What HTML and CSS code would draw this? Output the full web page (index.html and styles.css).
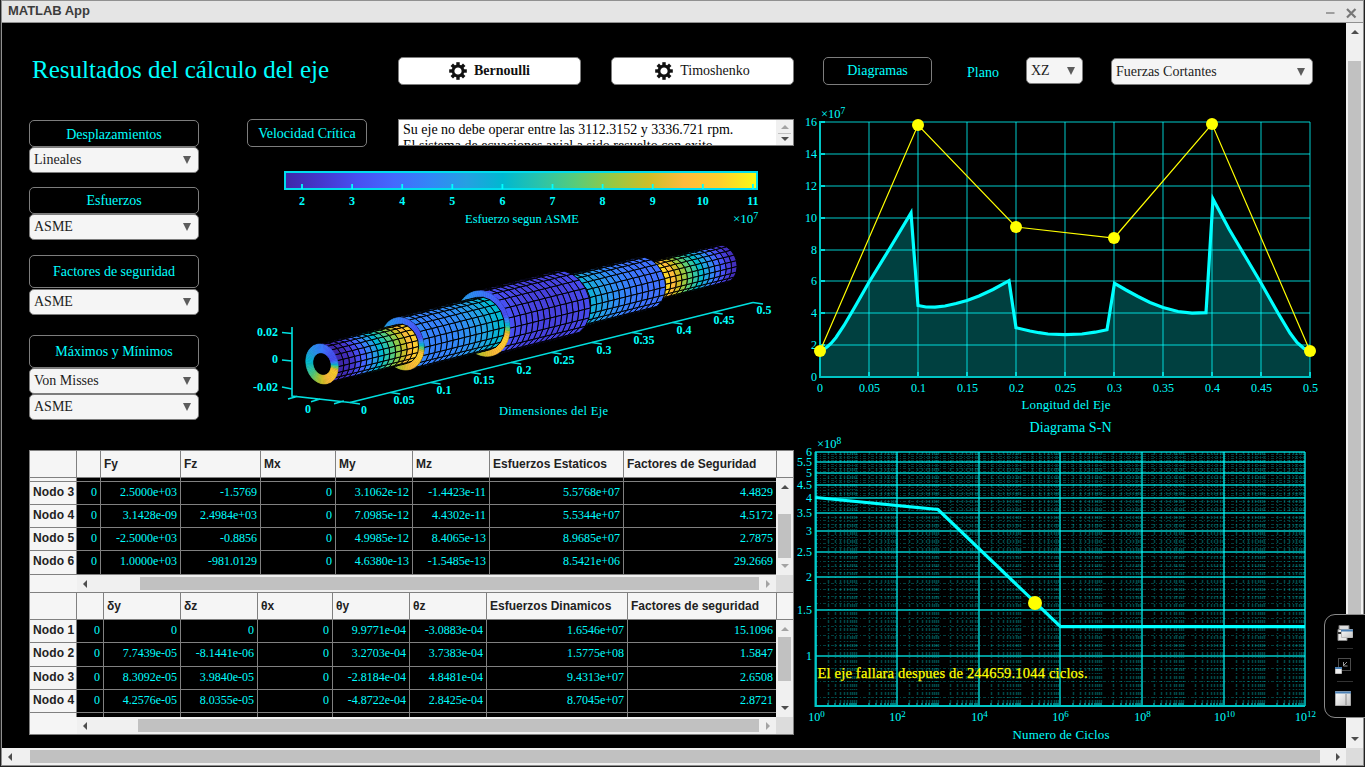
FILE: index.html
```html
<!DOCTYPE html>
<html lang="es">
<head>
<meta charset="utf-8">
<title>MATLAB App</title>
<link rel="stylesheet" href="styles.css">
</head>
<body>
<div class="window">
  <header class="titlebar">
    <span class="titlebar-text">MATLAB App</span>
    <svg class="titlebar-icons" width="34" height="21" viewBox="0 0 34 21"><path d="M0 12h8.500" stroke="#777" stroke-width="1.3"/><path d="M21 8l8.500 8.500M29.500 8l-8.500 8.500" stroke="#777" stroke-width="2.2"/></svg>
  </header>
  <div class="view">
    <main class="app">
      <section class="left">
        <div class="toprow">
          <h1>Resultados del cálculo del eje</h1>
          <button class="btn light bold"><svg class="gear" viewBox="-9 -9 18 18"></svg>Bernoulli</button>
          <button class="btn light"><svg class="gear" viewBox="-9 -9 18 18"></svg>Timoshenko</button>
        </div>
        <div class="middle">
          <div class="side">
            <div class="group g1"><button class="btn">Desplazamientos</button><div class="drop">Lineales</div></div>
            <div class="group g2"><button class="btn">Esfuerzos</button><div class="drop">ASME</div></div>
            <div class="group g3"><button class="btn tall">Factores de seguridad</button><div class="drop">ASME</div></div>
            <div class="group g4"><button class="btn tall">Máximos y Mínimos</button><div class="drop">Von Misses</div><div class="drop">ASME</div></div>
          </div>
          <div class="viz">
            <div class="critrow">
              <button class="btn crit">Velocidad Crítica</button>
              <div class="msg">
                <div class="msg-text">Su eje no debe operar entre las 3112.3152 y 3336.721 rpm.<br>El sistema de ecuaciones axial a sido resuelto con exito.</div>
                <div class="spin"><i class="arr up dim"></i><i class="sep"></i><i class="arr down"></i></div>
              </div>
            </div>
            <svg id="shaft" class="shaft" width="547" height="303" viewBox="247 147 547 303"></svg>
          </div>
        </div>
        <div class="table t1" id="t1"></div>
        <div class="table t2" id="t2"></div>
      </section>
      <section class="right">
        <div class="controls">
          <button class="btn diag">Diagramas</button>
          <span class="plano">Plano</span>
          <div class="drop xz">XZ</div>
          <div class="drop fc">Fuerzas Cortantes</div>
        </div>
        <svg id="plots" class="plots" width="551" height="648" viewBox="795 100 551 648"></svg>
      </section>
    </main>
    <div class="vbar page-v"><i class="arr up"></i><i class="thumb"></i><i class="arr down"></i></div>
    <div class="hbar page-h"><i class="arr lft"></i><i class="thumb"></i><i class="arr rgt"></i></div>
    <div class="corner"></div>
  </div>
</div>
<aside class="dock">
  <svg width="40" height="102" viewBox="1325 615 40 102">
    <defs><linearGradient id="sheet" x1="0" y1="0" x2="1" y2="1"><stop offset="0" stop-color="#fff"/><stop offset="1" stop-color="#c4c4c4"/></linearGradient></defs>
    <path d="M1339 625.5h10v12h-10z" fill="#ddd" stroke="#777"/><path d="M1338 629.5h9v11h-9z" fill="#e9e9e9" stroke="#888"/>
    <path d="M1338 633h4" stroke="#333" stroke-width="2"/>
    <path d="M1341.500 629.500h11v8h-11z" fill="url(#sheet)" stroke="#bbb"/><path d="M1341 630.500h12" stroke="#4a80b5" stroke-width="2"/>
    <path d="M1337 648.500h16M1337 681.500h16" stroke="#333"/>
    <path d="M1338.500 658.500h12v12h-12z" fill="none" stroke="#999" stroke-dasharray="1 1"/>
    <path d="M1347 662l-3 3M1343.500 662v4h4" fill="none" stroke="#999"/>
    <path d="M1335.500 667.500h6v6h-6z" fill="#eee" stroke="#bbb"/><path d="M1335 668h7" stroke="#4a80b5" stroke-width="2"/>
    <path d="M1335.500 691.500h15v14h-15z" fill="url(#sheet)" stroke="#aaa"/><path d="M1335 692.500h16" stroke="#4a80b5" stroke-width="2"/><path d="M1346 694v11" stroke="#888"/>
  </svg>
</aside>
<script src="app.js"></script>
</body>
</html>
```
FILE: styles.css
```css
* { box-sizing: border-box; }
body { margin: 0; width: 1365px; height: 767px; background: #222; overflow: hidden; font-family: "Liberation Serif", serif; font-size: 14px; }
.window { margin-left: 1px; width: 1363px; height: 766px; border: 1px solid #909090; background: #000; }
.titlebar { height: 22px; background: #e5e5e5; border-bottom: 1px solid #909090; display: flex; justify-content: space-between; padding: 0 3px 0 6px; }
.titlebar-text { font: bold 13px/19px "Liberation Sans", sans-serif; color: #3c3c3c; letter-spacing: -0.05px; }
.view { display: grid; grid-template: 725px 17px / 1344px 17px; }
.app { display: flex; background: #000; overflow: hidden; }
.left { margin-left: 27px; width: 765px; padding-top: 34px; }
.right { width: 552px; padding-top: 34px; }
.toprow { display: flex; height: 28px; align-items: flex-start; }
h1 { margin: -1px 0 0 3px; width: 366px; font-weight: normal; font-size: 25px; line-height: 28px; color: #0ff; white-space: nowrap; }
.btn { font: 14px "Liberation Serif", serif; color: #0ff; background: #000; border: 1px solid #7d7d7d; border-radius: 5px; height: 28px; width: 170px; padding: 0; display: flex; align-items: center; justify-content: center; white-space: nowrap; }
.light { background: #fff; color: #111; width: 183px; gap: 7px; }
.light + .light { margin-left: 30px; }
.bold { font-weight: bold; }
.gear { width: 18px; height: 18px; }
.drop { height: 26px; width: 170px; background: #f5f5f5; color: #1c1c1c; border: 1px solid #7d7d7d; border-radius: 5px; padding: 0 7px 0 4px; display: flex; align-items: center; justify-content: space-between; line-height: 16px; }
.drop::after { content: ""; border: 4px solid transparent; border-top: 8px solid #5c5c5c; border-bottom: 0; }
.middle { display: flex; margin-top: 34px; height: 331px; }
.side { width: 170px; padding-top: 1px; }
.g1 { height: 67px; }
.g2 { height: 68px; }
.g2 .btn { height: 27px; }
.g3 { height: 80px; }
.g1 .btn { height: 27px; padding-top: 2px; }
.tall { height: 33px; }
.g3 .drop { margin-top: 1px; }
.viz { margin-left: 48px; width: 547px; }
.critrow { display: flex; gap: 31px; height: 28px; }
.crit { width: 120px; padding-top: 2px; }
.msg { width: 396px; height: 27px; background: #fff; border: 1px solid #7d7d7d; display: flex; justify-content: space-between; overflow: hidden; color: #000; }
.msg-text { padding: 2px 0 0 4px; line-height: 16px; white-space: nowrap; }
.spin { width: 17px; background: #f0f0f0; display: flex; flex-direction: column; align-items: center; justify-content: space-between; padding: 5px 0 4px; }
.sep { width: 13px; height: 1px; background: #c1c1c1; }
.shaft, .plots { display: block; }
svg text { font-family: "Liberation Serif", serif; fill: #0ff; }
.arr { display: block; border: 4px solid transparent; width: 0; height: 0; }
.arr.up { border-bottom-color: #4d4d4d; border-top: 0; }
.arr.down { border-top-color: #4d4d4d; border-bottom: 0; }
.arr.lft { border-right: 4px solid #4d4d4d; border-left: 0; }
.arr.rgt { border-left: 4px solid #4d4d4d; border-right: 0; }
.arr.up.dim { border-bottom-color: #a3a3a3; }
.arr.down.dim { border-top-color: #a3a3a3; }
.arr.rgt.dim { border-left-color: #a3a3a3; }
.vbar { background: #f0f0f0; display: flex; flex-direction: column; align-items: center; width: 17px; }
.vbar .thumb { width: 13px; background: #c1c1c1; }
.vbar .arr.down { margin-top: auto; }
.hbar { background: #f0f0f0; display: flex; align-items: center; height: 17px; }
.hbar .thumb { height: 13px; background: #c1c1c1; }
.hbar .arr.rgt { margin-left: auto; }
.corner { background: #dcdcdc; width: 17px; height: 17px; }
.page-v { padding: 7px 0; }
.page-v .thumb { margin-top: 27px; height: 600px; }
.page-h { padding: 0 6px; }
.page-h .thumb { margin-left: 18px; width: 1290px; }
.controls { display: flex; height: 43px; padding-left: 29px; color: #0ff; }
.diag { width: 109px; }
.plano { margin: 7px 26px 0 35px; width: 33px; line-height: 17px; }
.xz { width: 57px; height: 27px; }
.fc { width: 202px; height: 27px; margin: 1px 0 0 28px; }
.plots { margin-left: 1px; }

.table { width: 765px; border: 1px solid #808080; background: #f5f5f5; height: 143px; }
.t1 { height: 142px; border-bottom: 0; }
.thead, .trow { display: grid; overflow: hidden; }
.t1 .thead, .t1 .trow { grid-template-columns: 47px 24px 80px 80px 75px 77px 77px 134px 152px 17px; }
.t2 .thead, .t2 .trow { grid-template-columns: 47px 27px 77px 77px 75px 77px 77px 141px 148px 17px; }
.thead { height: 27px; font: bold 12px/26px "Liberation Sans", sans-serif; color: #222; }
.thead div { border-right: 1px solid #808080; border-bottom: 1px solid #808080; padding-left: 3px; white-space: nowrap; }
.thead div:nth-child(9) { border-right: 0; }
.thead div:last-child { border-right: 0; border-left: 1px solid #808080; }
.tbody { display: grid; grid-template-columns: 746px 17px; background: #000; }
.trow { width: 746px; font-size: 12px; line-height: 20px; color: #0ff; text-align: right; }
.trow div { border-right: 1px solid #808080; border-bottom: 1px solid #808080; padding-right: 3px; overflow: hidden; }
.trow div:nth-child(9) { border-right: 0; }
.trow div:first-child { background: #f5f5f5; color: #222; font: bold 12px/21px "Liberation Sans", sans-serif; text-align: left; padding: 0 0 0 3px; letter-spacing: 0.1px; white-space: nowrap; }
.h23 { height: 23px; }
.h24 { height: 24px; }
.h4 { height: 4px; }
.open div { border-bottom: 0; }
.tfoot { display: grid; grid-template-columns: 47px 699px 17px; }
.tfoot .hbar { padding: 0 6px; }
.t1 .tfoot .thumb { margin-left: 53px; width: 619px; }
.t2 .tfoot .thumb { margin-left: 51px; width: 621px; }
.tbody .vbar { padding: 7px 0; }
.t1 .vbar .thumb { margin-top: 25px; height: 44px; }
.t2 .vbar .thumb { margin-top: 6px; height: 44px; }
.dock { position: absolute; left: 1324px; top: 614px; width: 43px; height: 104px; background: #000; border: 1px solid #8a8a8a; border-radius: 11px 0 0 11px; }
```
FILE: app.js
```js
const NS = 'http://www.w3.org/2000/svg';
function add(parent, tag, attrs, text) {
  const e = document.createElementNS(NS, tag);
  for (const k in attrs) e.setAttribute(k, attrs[k]);
  if (text !== undefined) e.textContent = text;
  parent.appendChild(e);
  return e;
}
function label(parent, x, y, text, size, anchor, extra) {
  return add(parent, 'text', Object.assign({ x, y, 'font-size': size, 'text-anchor': anchor || 'middle' }, extra), text);
}
function power(parent, x, y, base, exp, size, anchor) {
  const t = label(parent, x, y, base, size, anchor);
  add(t, 'tspan', { dy: -4, 'font-size': size - 3 }, exp);
}

document.querySelectorAll('.gear').forEach(g => {
  add(g, 'circle', { r: 5, fill: 'none', stroke: '#111', 'stroke-width': 2.8 });
  for (let a = 0; a < 360; a += 45)
    add(g, 'rect', { x: -1.7, y: -8.8, width: 3.4, height: 3.6, fill: '#111', transform: `rotate(${a})` });
});

/* Tables */
function table(id, heads, rows, upDim, downDim) {
  const cells = a => a.map(c => `<div>${c}</div>`).join('');
  document.getElementById(id).innerHTML =
    `<div class="thead">${cells(heads)}</div><div class="tbody"><div>` +
    rows.map(r => `<div class="trow ${r[0]}">${cells(r.slice(1))}</div>`).join('') +
    `</div><div class="vbar"><i class="arr up ${upDim}"></i><i class="thumb"></i><i class="arr down ${downDim}"></i></div></div>` +
    '<div class="tfoot"><div></div><div class="hbar"><i class="arr lft"></i><i class="thumb"></i><i class="arr rgt dim"></i></div><div class="corner"></div></div>';
}
const blank = ['', '', '', '', '', '', '', '', ''];
table('t1', ['', '', 'Fy', 'Fz', 'Mx', 'My', 'Mz', 'Esfuerzos Estaticos', 'Factores de Seguridad', ''], [
  ['h4', ...blank],
  ['h23', 'Nodo 3', '0', '2.5000e+03', '-1.5769', '0', '3.1062e-12', '-1.4423e-11', '5.5768e+07', '4.4829'],
  ['h23', 'Nodo 4', '0', '3.1428e-09', '2.4984e+03', '0', '7.0985e-12', '4.4302e-11', '5.5344e+07', '4.5172'],
  ['h23', 'Nodo 5', '0', '-2.5000e+03', '-0.8856', '0', '4.9985e-12', '8.4065e-13', '8.9685e+07', '2.7875'],
  ['h24', 'Nodo 6', '0', '1.0000e+03', '-981.0129', '0', '4.6380e-13', '-1.5485e-13', '8.5421e+06', '29.2669']
], '', 'dim');
table('t2', ['', '', 'δy', 'δz', 'θx', 'θy', 'θz', 'Esfuerzos Dinamicos', 'Factores de seguridad', ''], [
  ['h23', 'Nodo 1', '0', '0', '0', '0', '9.9771e-04', '-3.0883e-04', '1.6546e+07', '15.1096'],
  ['h24', 'Nodo 2', '0', '7.7439e-05', '-8.1441e-06', '0', '3.2703e-04', '3.7383e-04', '1.5775e+08', '1.5847'],
  ['h23', 'Nodo 3', '0', '8.3092e-05', '3.9840e-05', '0', '-2.8184e-04', '4.8481e-04', '9.4313e+07', '2.6508'],
  ['h23', 'Nodo 4', '0', '4.2576e-05', '8.0355e-05', '0', '-4.8722e-04', '2.8425e-04', '8.7045e+07', '2.8721'],
  ['h4 open', ...blank]
], 'dim', '');

/* Stress curve in plot coordinates */
const curve = [[820,351],[823,349.800],[827,347],[831,343.500],[836,337.500],[844,325.500],[856,305],[868.500,283],[890,248],[911,213],[918,305.500],[926,307],[935,307.200],[945,306],[956,303.500],[967,300.500],[979,296],[993,289.500],[1009,280.700],[1016,327.700],[1030,331],[1039,332.700],[1048,334],[1065,334.700],[1082,334],[1095,332.200],[1107,329.700],[1114.500,283.300],[1126,290],[1138,296.500],[1150,302.500],[1163,307.500],[1178,311.500],[1192,313.200],[1206,312.700],[1213,199],[1229,229],[1245,256],[1261,283],[1278,313],[1290,333],[1297,342.500],[1304,348.500],[1310,351]];
function stress(s) {
  const x = 820 + s * 980;
  for (let i = 1; i < curve.length; i++)
    if (x <= curve[i][0] + 1e-6) {
      const [a, b] = [curve[i - 1], curve[i]];
      return (377 - (a[1] + (b[1] - a[1]) * (x - a[0]) / (b[0] - a[0]))) / 15.94;
    }
  return 1.65;
}
const parula = [[62,38,168],[69,55,206],[72,79,242],[68,105,254],[50,135,247],[37,160,226],[0,184,208],[42,195,170],[88,204,122],[150,200,68],[205,190,40],[254,186,60],[253,208,44],[249,251,21]];
function colour(v) {
  let f = Math.max(0, Math.min(0.9999, (v - 1.65) / 9.45)) * (parula.length - 1);
  const i = Math.floor(f); f -= i;
  return 'rgb(' + parula[i].map((c, k) => Math.round(c + (parula[i + 1][k] - c) * f)).join() + ')';
}

/* Colour bar and 3-D shaft */
const sh = document.getElementById('shaft');
const grad = add(add(sh, 'defs', {}), 'linearGradient', { id: 'bar' });
parula.forEach((c, i) => add(grad, 'stop', { offset: i / (parula.length - 1), 'stop-color': `rgb(${c})` }));
add(sh, 'rect', { x: 285, y: 172, width: 472, height: 17, fill: 'url(#bar)', stroke: '#0de', 'stroke-width': 2 });
for (let v = 2; v <= 11; v++) {
  const x = 302 + (v - 2) * 50.1;
  add(sh, 'path', { d: `M${x} 184v5`, stroke: '#0ff', 'stroke-width': 1.8 });
  label(sh, x, 205, v, 12, 'middle', { 'font-weight': 'bold' });
}
label(sh, 465, 223, 'Esfuerzo segun ASME', 12.500, 'start', { textLength: 114 });
power(sh, 733, 223, '×10', '7', 13, 'start');

const R = 16, RY = 19.5, SK = 2.8;
const pt = (s, r, t) => [322 + 806 * s + r * R * Math.cos(t), 364 - 202 * s + r * (SK * Math.cos(t) - RY * Math.sin(t))];
const poly = ps => 'M' + ps.map(p => p.map(n => n.toFixed(1)).join()).join('L') + 'Z';
const ringStops = [[0,7],[12,5],[25,3],[50,3.4],[90,4.2],[135,5],[180,6],[225,7.3],[255,8.4],[285,9.3],[315,10],[340,10.400],[352,9],[360,7]];
function ringValue(deg) {
  for (let i = 1; i < ringStops.length; i++)
    if (deg <= ringStops[i][0]) {
      const [a, b] = [ringStops[i - 1], ringStops[i]];
      return a[1] + (b[1] - a[1]) * (deg - a[0]) / (b[0] - a[0]);
    }
}
function ring(s, r0, r1) {
  for (let d = 0; d < 360; d += 5) {
    const a = d * Math.PI / 180, b = (d + 5) * Math.PI / 180, c = colour(ringValue(d + 2.5));
    add(sh, 'path', { d: poly([pt(s, r0, a), pt(s, r1, a), pt(s, r1, b), pt(s, r0, b)]), fill: c, stroke: c, 'stroke-width': 0.6 });
  }
}
function cylinder(s0, s1, r) {
  const n = 14, m = 20, ds = (s1 - s0) / n, dt = 2 * Math.PI / m;
  for (let i = n - 1; i >= 0; i--) {
    const a = s0 + i * ds, b = a + ds, fill = colour(stress(Math.min(a, s0 + 0.0925)));
    for (let j = 0; j < m; j++) {
      const t = j * dt, mid = t + dt / 2;
      if (403 * (RY * Math.cos(mid) + SK * Math.sin(mid)) + 101 * R * Math.sin(mid) <= -900) continue;
      add(sh, 'path', { d: poly([pt(a, r, t), pt(b, r, t), pt(b, r, t + dt), pt(a, r, t + dt)]), fill, stroke: '#000', 'stroke-width': 1 });
    }
  }
}
cylinder(0.400, 0.496, 0.96);
cylinder(0.300, 0.400, 1.33);
cylinder(0.200, 0.300, 1.66);
ring(0.2, 1.33, 1.66);
cylinder(0.100, 0.200, 1.35);
ring(0.1, 0.98, 1.33);
cylinder(0, 0.1, 1);
ring(0, 0.57, 1.01);

add(sh, 'path', { d: 'M292 327V396L350 402.500L753 302.500M282 332.500l10 1M282 360l10 1M282 387l10 2M288 399l9-2.500M311 401.700l9-2.600M334 403.700l10-2.600', fill: 'none', stroke: '#00e0e0', 'stroke-width': 1.6 });
['0', '0.05', '0.1', '0.15', '0.2', '0.25', '0.3', '0.35', '0.4', '0.45', '0.5'].forEach((v, i) => {
  add(sh, 'path', { d: `M${350 + i * 40.3} ${402.5 - i * 10}l10 1.500`, stroke: '#00e0e0', 'stroke-width': 1.6 });
  label(sh, 364 + i * 40, 414 - i * 10, v, 12, 'middle', { 'font-weight': 'bold' });
});
[['0.02', 336], ['0', 363], ['-0.02', 391]].forEach(([t, y]) => label(sh, 278, y, t, 12, 'end', { 'font-weight': 'bold' }));
label(sh, 308, 413, '0', 12, 'middle', { 'font-weight': 'bold' });
label(sh, 499, 415, 'Dimensiones del Eje', 12.500, 'start', { textLength: 109 });

/* Shear diagram */
const pl = document.getElementById('plots');
const line = 'M' + curve.map(p => p.join()).join('L');
add(pl, 'path', { d: line + 'L1310 377L820 377Z', fill: '#004040' });
for (let i = 0; i <= 10; i++) {
  const x = 820 + i * 49;
  add(pl, 'path', { d: `M${x} 122V377`, stroke: '#0ff', 'stroke-opacity': 0.4, 'stroke-width': 2 });
  add(pl, 'path', { d: `M${x} 377v-5`, stroke: '#00d8d8', 'stroke-width': 2 });
  label(pl, x + (i ? 0.5 : 0), 392, +(i * 0.05).toFixed(2), 12);
}
for (let i = 0; i <= 8; i++) {
  const y = Math.round(377 - i * 31.875);
  add(pl, 'path', { d: `M820 ${y}H1310`, stroke: '#0ff', 'stroke-opacity': 0.4, 'stroke-width': 2 });
  add(pl, 'path', { d: `M820 ${y}h5`, stroke: '#00d8d8', 'stroke-width': 2 });
  label(pl, 817, y + 4, i * 2, 12, 'end');
}
add(pl, 'path', { d: 'M820 121V377H1311', fill: 'none', stroke: '#00c4c4', 'stroke-width': 2 });
add(pl, 'path', { d: line, fill: 'none', stroke: '#0ff', 'stroke-width': 3.200 });
const peaks = [[820,351],[918,125],[1016,227],[1114,238],[1212,124],[1310,351]];
add(pl, 'path', { d: 'M' + peaks.map(p => p.join()).join('L'), fill: 'none', stroke: '#ff0', 'stroke-width': 1.2 });
peaks.forEach(([cx, cy]) => add(pl, 'circle', { cx, cy, r: 6, fill: '#ff0' }));
power(pl, 821, 118, '×10', '7', 12.500, 'start');
label(pl, 1021.5, 409, 'Longitud del Eje', 13, 'start', { textLength: 89 });

/* S-N diagram */
const sy = v => 656 - 262 * Math.log10(v);
label(pl, 1029.5, 432, 'Diagrama S-N', 14, 'start', { textLength: 82 });
power(pl, 817, 448, '×10', '8', 12.500, 'start');
let minor = '';
for (let v = 7; v < 60; v++) if (v % 5 || v < 10) minor += `M815 ${Math.round(sy(v / 10))}.500H1305`;
add(pl, 'path', { d: minor, stroke: '#0ff', 'stroke-opacity': 0.25, 'stroke-width': 1, 'stroke-dasharray': '3 2 1 2', 'shape-rendering': 'crispEdges' });
let minorV = '', ticks = '';
for (let d = 0; d < 12; d++) for (let k = 2; k <= 10; k++) {
  const x = Math.round(815.5 + 40.8 * (d + Math.log10(k)));
  if (k === 10 && d % 2) continue;
  minorV += `M${x}.500 452V706`;
  ticks += `M${x} 706v-3`;
}
add(pl, 'path', { d: minorV, stroke: '#0ff', 'stroke-opacity': 0.28, 'stroke-width': 1.5, 'stroke-dasharray': '3 2 1 2' });
add(pl, 'path', { d: ticks, stroke: '#00c8c8', 'stroke-width': 1.2 });
[1, 1.5, 2, 2.5, 3, 3.5, 4, 4.5, 5, 5.5, 6].forEach(v => {
  const y = Math.round(sy(v));
  add(pl, 'path', { d: `M815 ${y}H1305`, stroke: '#0ff', 'stroke-opacity': 0.6, 'stroke-width': 2 });
  label(pl, 812, y + 4, v, 12, 'end');
});
for (let i = 0; i <= 6; i++) {
  const x = Math.round(815.5 + i * 81.6);
  add(pl, 'path', { d: `M${x} 452V706`, stroke: '#0ff', 'stroke-opacity': 0.6, 'stroke-width': 2 });
  power(pl, x + 0.5, 721, '10', i * 2, 12, 'middle');
}
add(pl, 'path', { d: 'M815.500 452V706H1305', fill: 'none', stroke: '#00c8c8', 'stroke-width': 2 });
add(pl, 'path', { d: 'M815.500 497.500L938 509.500L1060.500 626.700H1305', fill: 'none', stroke: '#0ff', 'stroke-width': 3.2 });
add(pl, 'circle', { cx: 1035, cy: 603, r: 7, fill: '#ff0' });
label(pl, 817.5, 678, 'El eje fallara despues de 244659.1044 ciclos.', 14.500, 'start', { textLength: 270, style: 'fill:#ff0;stroke:#ff0;stroke-width:.25px' });
label(pl, 1012.5, 739, 'Numero de Ciclos', 13, 'start', { textLength: 97 });
```
